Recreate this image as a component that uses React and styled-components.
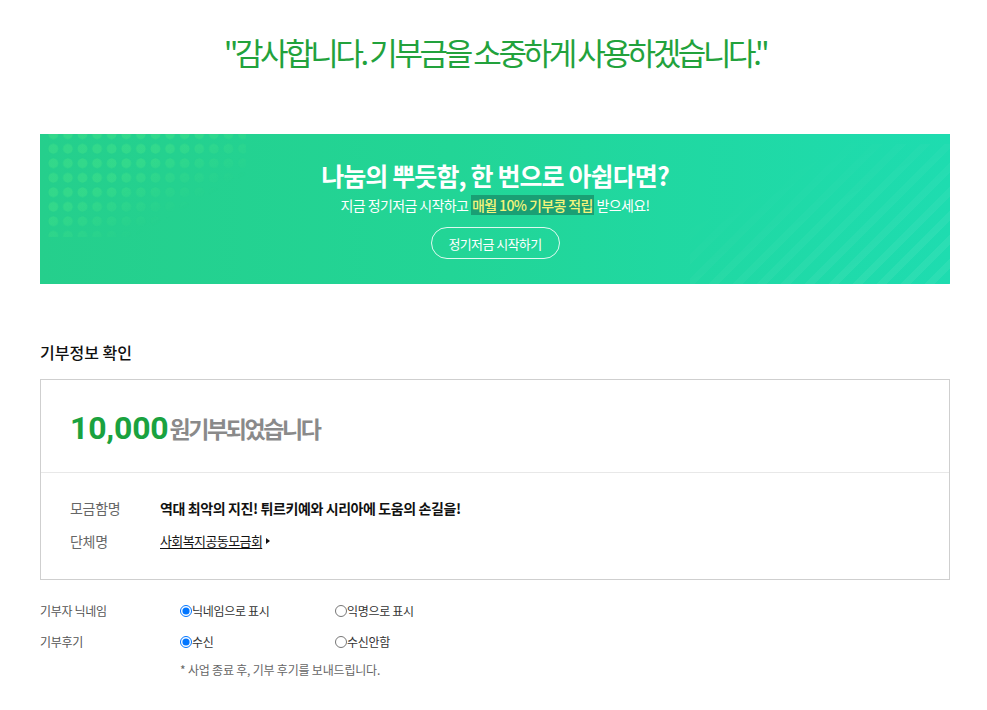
import React from "react";
import styled, { createGlobalStyle } from "styled-components";

const GlobalStyle = createGlobalStyle`
  body {
    margin: 0;
    background: #fff;
    font-family: "Noto Sans CJK KR", "Noto Sans", sans-serif;
    color: #222;
  }
`;

const Page = styled.div`
  width: 910px;
  padding: 30px 40px 20px;
`;

const Thanks = styled.h1`
  margin: 0;
  height: 44px;
  line-height: 44px;
  text-align: center;
  font-size: 31px;
  font-weight: 400;
  letter-spacing: -3.4px;
  color: #22a23c;
`;

const Banner = styled.section`
  position: relative;
  overflow: hidden;
  margin-top: 60px;
  height: 150px;
  display: flex;
  flex-direction: column;
  align-items: center;
  background: linear-gradient(90deg, #25cf8c 0%, #22d596 45%, #1edcb0 100%);
  color: #fff;

  &::before {
    content: "";
    position: absolute;
    left: 6px;
    top: -7px;
    width: 200px;
    height: 110px;
    background: radial-gradient(circle, rgba(80, 235, 135, 0.32) 4.6px, transparent 5.2px) 0 0 / 14.6px 14.5px;
    -webkit-mask-image: linear-gradient(to bottom right, #000 40%, transparent 72%);
    mask-image: linear-gradient(to bottom right, #000 40%, transparent 72%);
  }

  &::after {
    content: "";
    position: absolute;
    right: 0;
    bottom: 0;
    width: 260px;
    height: 140px;
    background: repeating-linear-gradient(135deg, rgba(255, 255, 255, 0) 0 10px, rgba(255, 255, 255, 0.06) 10px 17px);
    -webkit-mask-image: linear-gradient(to top left, #000 20%, transparent 75%);
    mask-image: linear-gradient(to top left, #000 20%, transparent 75%);
  }
`;

const BannerTitle = styled.h2`
  position: relative;
  z-index: 1;
  margin: 24px 0 0;
  font-size: 25px;
  line-height: 34px;
  font-weight: 700;
  letter-spacing: -0.9px;
`;

const BannerText = styled.p`
  position: relative;
  z-index: 1;
  margin: 3px 0 0;
  font-size: 14px;
  line-height: 20px;
  letter-spacing: -0.6px;
`;

const Mark = styled.span`
  background: #1a9f74;
  color: #f3f47a;
  font-weight: 500;
  padding: 0 1px;
`;

const OutlineButton = styled.button`
  position: relative;
  z-index: 1;
  margin-top: 12px;
  width: 129px;
  height: 32px;
  border: 1px solid rgba(255, 255, 255, 0.85);
  border-radius: 16px;
  background: transparent;
  color: #fff;
  font-family: inherit;
  font-size: 13px;
  letter-spacing: -0.6px;
`;

const SectionTitle = styled.h3`
  margin: 58px 0 0;
  font-size: 16px;
  line-height: 20px;
  font-weight: 500;
  color: #111;
`;

const Box = styled.div`
  margin-top: 17px;
  border: 1px solid #cfcfcf;
`;

const Summary = styled.div`
  height: 93px;
  display: flex;
  align-items: center;
  padding: 4px 29px 0;
  box-sizing: border-box;
  border-bottom: 1px solid #e8e8e8;
`;

const Amount = styled.strong`
  font-family: "Roboto", "Liberation Sans", sans-serif;
  font-size: 32px;
  font-weight: 700;
  color: #1aa23f;
  letter-spacing: -0.2px;
`;

const AmountText = styled.span`
  font-size: 23px;
  font-weight: 700;
  color: #8a8a8a;
  letter-spacing: -2.4px;
  margin-left: 1px;
`;

const InfoList = styled.div`
  display: grid;
  grid-template-columns: 90px 1fr;
  row-gap: 13px;
  padding: 25px 29px 28px;
  font-size: 14px;
  line-height: 20px;
`;

const InfoLabel = styled.div`
  color: #666;
  letter-spacing: -0.3px;
`;

const InfoValue = styled.div`
  color: #111;
  font-weight: ${(p) => (p.$bold ? 700 : 400)};
  letter-spacing: -0.4px;
  display: flex;
  align-items: center;
`;

const OrgLink = styled.a`
  color: #111;
  text-decoration: underline;
  text-underline-offset: 2px;
  font-size: 13px;
  letter-spacing: -0.6px;
`;

const Caret = styled.span`
  margin-left: 4px;
  width: 0;
  height: 0;
  border-left: 4px solid #111;
  border-top: 3px solid transparent;
  border-bottom: 3px solid transparent;
`;

const Options = styled.div`
  margin-top: 21px;
  display: grid;
  grid-template-columns: 140px 155px 1fr;
  row-gap: 11px;
  font-size: 12px;
  line-height: 20px;
`;

const OptionLabel = styled.div`
  color: #555;
  letter-spacing: -0.3px;
`;

const Choice = styled.label`
  display: flex;
  align-items: center;
  color: #333;
  letter-spacing: -0.3px;

  input {
    margin: 0;
    width: 12px;
    height: 12px;
  }
`;

const Note = styled.p`
  grid-column: 2 / 4;
  margin: -3px 0 0;
  color: #666;
  font-size: 12px;
  letter-spacing: -0.2px;
`;

export default function App() {
  return (
    <>
      <GlobalStyle />
      <Page>
        <Thanks>"감사합니다. 기부금을 소중하게 사용하겠습니다."</Thanks>

        <Banner>
          <BannerTitle>나눔의 뿌듯함, 한 번으로 아쉽다면?</BannerTitle>
          <BannerText>
            지금 정기저금 시작하고 <Mark>매월 10% 기부콩 적립</Mark> 받으세요!
          </BannerText>
          <OutlineButton>정기저금 시작하기</OutlineButton>
        </Banner>

        <SectionTitle>기부정보 확인</SectionTitle>
        <Box>
          <Summary>
            <Amount>10,000</Amount>
            <AmountText>원기부되었습니다</AmountText>
          </Summary>
          <InfoList>
            <InfoLabel>모금함명</InfoLabel>
            <InfoValue $bold>역대 최악의 지진! 튀르키예와 시리아에 도움의 손길을!</InfoValue>
            <InfoLabel>단체명</InfoLabel>
            <InfoValue>
              <OrgLink href="#">사회복지공동모금회</OrgLink>
              <Caret />
            </InfoValue>
          </InfoList>
        </Box>

        <Options>
          <OptionLabel>기부자 닉네임</OptionLabel>
          <Choice>
            <input type="radio" name="nick" defaultChecked />
            닉네임으로 표시
          </Choice>
          <Choice>
            <input type="radio" name="nick" />
            익명으로 표시
          </Choice>
          <OptionLabel>기부후기</OptionLabel>
          <Choice>
            <input type="radio" name="review" defaultChecked />
            수신
          </Choice>
          <Choice>
            <input type="radio" name="review" />
            수신안함
          </Choice>
          <Note>* 사업 종료 후, 기부 후기를 보내드립니다.</Note>
        </Options>
      </Page>
    </>
  );
}
